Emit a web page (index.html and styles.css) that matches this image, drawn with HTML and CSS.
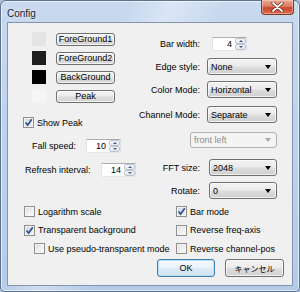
FILE: index.html
```html
<!DOCTYPE html>
<html>
<head>
<meta charset="utf-8">
<title>Config</title>
<link rel="stylesheet" href="styles.css">
</head>
<body>
<div class="window">
  <div class="titlebar">
    <span class="title">Config</span>
    <div class="close">
      <svg width="13" height="10" viewBox="0 0 13 10"><path d="M2 1 L11 9 M11 1 L2 9" stroke="#5a2216" stroke-width="3.2" stroke-linecap="round"/><path d="M2 1 L11 9 M11 1 L2 9" stroke="#fff" stroke-width="1.8" stroke-linecap="round"/></svg>
    </div>
  </div>
  <div class="client">
    <div class="top">
      <div class="left">
        <div class="colors">
          <div class="crow"><span class="swatch sw1"></span><span class="btn cbtn">ForeGround1</span></div>
          <div class="crow"><span class="swatch sw2"></span><span class="btn cbtn">ForeGround2</span></div>
          <div class="crow"><span class="swatch sw3"></span><span class="btn cbtn">BackGround</span></div>
          <div class="crow"><span class="swatch sw4"></span><span class="btn cbtn">Peak</span></div>
        </div>
        <div class="check peakcheck"><span class="box checked"><svg width="9" height="9" viewBox="0 0 9 9"><path d="M1.5 4.5 L3.6 7 L7.8 1.2" stroke="#33508c" stroke-width="1.7" fill="none"/></svg></span>Show Peak</div>
        <div class="spinrow fall">
          <span class="slbl">Fall speed:</span>
          <div class="spin"><span class="val">10</span><span class="arrows"><span class="ab"><i class="up"></i></span><span class="ab"><i class="dn"></i></span></span></div>
        </div>
        <div class="spinrow refresh">
          <span class="slbl">Refresh interval:</span>
          <div class="spin"><span class="val">14</span><span class="arrows"><span class="ab"><i class="up"></i></span><span class="ab"><i class="dn"></i></span></span></div>
        </div>
      </div>
      <div class="right">
        <div class="frow">
          <span class="flbl">Bar width:</span>
          <div class="spin bw"><span class="val">4</span><span class="arrows"><span class="ab"><i class="up"></i></span><span class="ab"><i class="dn"></i></span></span></div>
        </div>
        <div class="frow g6">
          <span class="flbl">Edge style:</span>
          <div class="select s70"><span>None</span><i class="tri"></i></div>
        </div>
        <div class="frow g6">
          <span class="flbl">Color Mode:</span>
          <div class="select s70"><span>Horizontal</span><i class="tri"></i></div>
        </div>
        <div class="frow g8">
          <span class="flbl">Channel Mode:</span>
          <div class="select s70"><span>Separate</span><i class="tri"></i></div>
        </div>
        <div class="frow g8 nolabel">
          <div class="select disabled"><span>front left</span><i class="tri"></i></div>
        </div>
        <div class="frow g11">
          <span class="flbl">FFT size:</span>
          <div class="select s68"><span>2048</span><i class="tri"></i></div>
        </div>
        <div class="frow g6">
          <span class="flbl">Rotate:</span>
          <div class="select s68"><span>0</span><i class="tri"></i></div>
        </div>
      </div>
    </div>
    <div class="checks">
      <div class="check"><span class="box"></span>Logarithm scale</div>
      <div class="check"><span class="box checked"><svg width="9" height="9" viewBox="0 0 9 9"><path d="M1.5 4.5 L3.6 7 L7.8 1.2" stroke="#33508c" stroke-width="1.7" fill="none"/></svg></span>Bar mode</div>
      <div class="check"><span class="box checked"><svg width="9" height="9" viewBox="0 0 9 9"><path d="M1.5 4.5 L3.6 7 L7.8 1.2" stroke="#33508c" stroke-width="1.7" fill="none"/></svg></span>Transparent background</div>
      <div class="check"><span class="box"></span>Reverse freq-axis</div>
      <div class="check indent"><span class="box"></span>Use pseudo-transparent mode</div>
      <div class="check"><span class="box"></span>Reverse channel-pos</div>
    </div>
    <div class="buttons">
      <span class="btn dbtn okbtn">OK</span>
      <span class="btn dbtn cancel">キャンセル</span>
    </div>
  </div>
</div>
</body>
</html>
```
FILE: styles.css
```css
html, body {
  margin: 0;
  padding: 0;
}
body {
  width: 300px;
  height: 292px;
  overflow: hidden;
  background: #a9c0dc;
  font-family: "Liberation Sans", Arial, sans-serif;
  font-size: 9px;
  color: #000;
}
.window {
  position: relative;
  box-sizing: border-box;
  width: 300px;
  height: 292px;
  display: flex;
  flex-direction: column;
  border: 1px solid #5f7390;
  border-radius: 6px 6px 5px 5px;
  background:
    linear-gradient(115deg, rgba(255,255,255,0) 30%, rgba(255,255,255,0.35) 40%, rgba(255,255,255,0) 52%),
    linear-gradient(180deg, #c8d9ef 0%, #bed3ee 40%, #b3cbea 100%);
  box-shadow: inset 0 0 0 1px rgba(255,255,255,0.6);
}
.titlebar {
  height: 21px;
  flex: none;
  display: flex;
  align-items: center;
  padding-left: 6px;
}
.title {
  font-size: 10px;
  color: #1c2433;
  text-shadow: 0 0 4px rgba(255,255,255,0.9);
  margin-top: 4px;
}
.close {
  position: absolute;
  top: -1px;
  right: 5px;
  width: 33px;
  height: 15px;
  box-sizing: border-box;
  border: 1px solid #81392a;
  border-top: none;
  border-radius: 0 0 4px 4px;
  background: linear-gradient(180deg, #e8a996 0%, #dc7c64 45%, #c9452b 55%, #d66e52 100%);
  box-shadow: inset 0 0 0 1px rgba(255,220,200,0.45);
  display: flex;
  align-items: center;
  justify-content: center;
}
.client {
  flex: 1;
  margin: 0 6px 5px 6px;
  box-sizing: border-box;
  border: 1px solid #8494ab;
  background: #f0f0f0;
  display: flex;
  flex-direction: column;
}
.top {
  display: flex;
  height: 176px;
}
.left {
  width: 128px;
  padding-top: 9px;
  box-sizing: border-box;
}
.colors {
  display: flex;
  flex-direction: column;
  gap: 5px;
  padding-left: 24px;
}
.crow {
  height: 14px;
  display: flex;
  align-items: center;
  gap: 10px;
}
.swatch {
  width: 14px;
  height: 14px;
  flex: none;
}
.sw1 { background: #e4e4e4; }
.sw2 { background: #1e1e1e; }
.sw3 { background: #000; }
.sw4 { background: #f5f5f5; }
.btn {
  box-sizing: border-box;
  display: flex;
  align-items: center;
  justify-content: center;
  border: 1px solid #707070;
  border-radius: 3px;
  background: linear-gradient(180deg, #f3f3f3 0%, #ececec 48%, #dedede 52%, #d2d2d2 100%);
  box-shadow: inset 0 0 0 1px rgba(255,255,255,0.75);
  color: #000;
  white-space: nowrap;
}
.cbtn {
  width: 59px;
  height: 13px;
}
.check {
  display: flex;
  align-items: center;
  height: 13px;
  white-space: nowrap;
}
.box {
  box-sizing: border-box;
  width: 11px;
  height: 11px;
  flex: none;
  margin-right: 3px;
  border: 1px solid #8f8f8f;
  background: linear-gradient(135deg, #dcdcdc 0%, #f2f2f2 60%, #fbfbfb 100%);
  box-shadow: inset 0 0 0 1px #f4f4f4;
  display: flex;
  align-items: center;
  justify-content: center;
}
.box.checked {
  background: linear-gradient(135deg, #cfd6e2 0%, #e4e8ef 60%, #f4f6f9 100%);
}
.box svg { display: block; }
.peakcheck {
  margin-top: 13px;
  padding-left: 15px;
}
.spinrow {
  display: flex;
  align-items: center;
  height: 14px;
  margin-top: 10px;
}
.fall { padding-left: 24px; }
.fall .slbl { width: 54px; }
.refresh { padding-left: 17px; }
.refresh .slbl { width: 77px; }
.spin {
  box-sizing: border-box;
  display: flex;
  width: 35px;
  height: 14px;
  background: #fff;
  border: 1px solid #e3e9ef;
  border-top-color: #abadb3;
  border-left-color: #e2e3ea;
  border-right-color: #dbdfe6;
}
.spin .val {
  flex: 1;
  text-align: right;
  padding-right: 3px;
  line-height: 12px;
}
.arrows {
  width: 11px;
  display: flex;
  flex-direction: column;
}
.ab {
  flex: 1;
  box-sizing: border-box;
  border: 1px solid #b9c2cf;
  border-radius: 2px;
  background: linear-gradient(180deg, #f5f7fa, #e4e8ee);
  display: flex;
  align-items: center;
  justify-content: center;
}
.up {
  width: 0;
  height: 0;
  border-left: 2.5px solid transparent;
  border-right: 2.5px solid transparent;
  border-bottom: 2.5px solid #4a5c78;
}
.dn {
  width: 0;
  height: 0;
  border-left: 2.5px solid transparent;
  border-right: 2.5px solid transparent;
  border-top: 2.5px solid #4a5c78;
}
.right {
  padding-top: 12px;
  box-sizing: border-box;
  flex: 1;
}
.frow {
  display: flex;
  align-items: center;
  height: 17px;
}
.g6 { margin-top: 6px; }
.g8 { margin-top: 8px; }
.g11 { margin-top: 11px; }
.flbl {
  width: 64px;
  text-align: right;
  white-space: nowrap;
  flex: none;
}
.bw { margin-left: 12px; }
.select {
  box-sizing: border-box;
  display: flex;
  align-items: center;
  height: 17px;
  padding-left: 3px;
  border: 1px solid #707070;
  border-radius: 3px;
  background: linear-gradient(180deg, #f2f2f2 0%, #ebebeb 48%, #dddddd 52%, #cfcfcf 100%);
  box-shadow: inset 0 0 0 1px rgba(255,255,255,0.7);
}
.select .tri {
  margin-left: auto;
  margin-right: 5px;
  width: 0;
  height: 0;
  border-left: 3.5px solid transparent;
  border-right: 3.5px solid transparent;
  border-top: 4px solid #000;
}
.s70 { width: 70px; margin-left: 7px; }
.s68 { width: 68px; margin-left: 9px; }
.nolabel { padding-left: 54px; }
.select.disabled {
  width: 87px;
  height: 16px;
  border-color: #adb2b5;
  background: #f4f4f4;
  box-shadow: none;
  color: #8d8d8d;
}
.select.disabled .tri { border-top-color: #a8a8a8; }
.checks {
  margin-top: 6px;
  display: grid;
  grid-template-columns: 152px auto;
  grid-template-rows: 13px 13px 13px;
  row-gap: 5.5px;
  padding-left: 16px;
}
.check.indent { padding-left: 10px; }
.buttons {
  margin-top: 4px;
  display: flex;
  justify-content: flex-end;
  gap: 10px;
  padding-right: 8px;
}
.dbtn {
  height: 18px;
}
.okbtn {
  width: 58px;
  border-color: #3c7fb1;
  background: linear-gradient(180deg, #f4f9fd 0%, #eaf3fa 48%, #dcebf6 52%, #d0e3f2 100%);
  box-shadow: inset 0 0 0 1px #b9e0f8;
}
.cancel {
  width: 59px;
  font-family: "Noto Sans CJK JP", sans-serif;
  font-size: 8px;
}
```
